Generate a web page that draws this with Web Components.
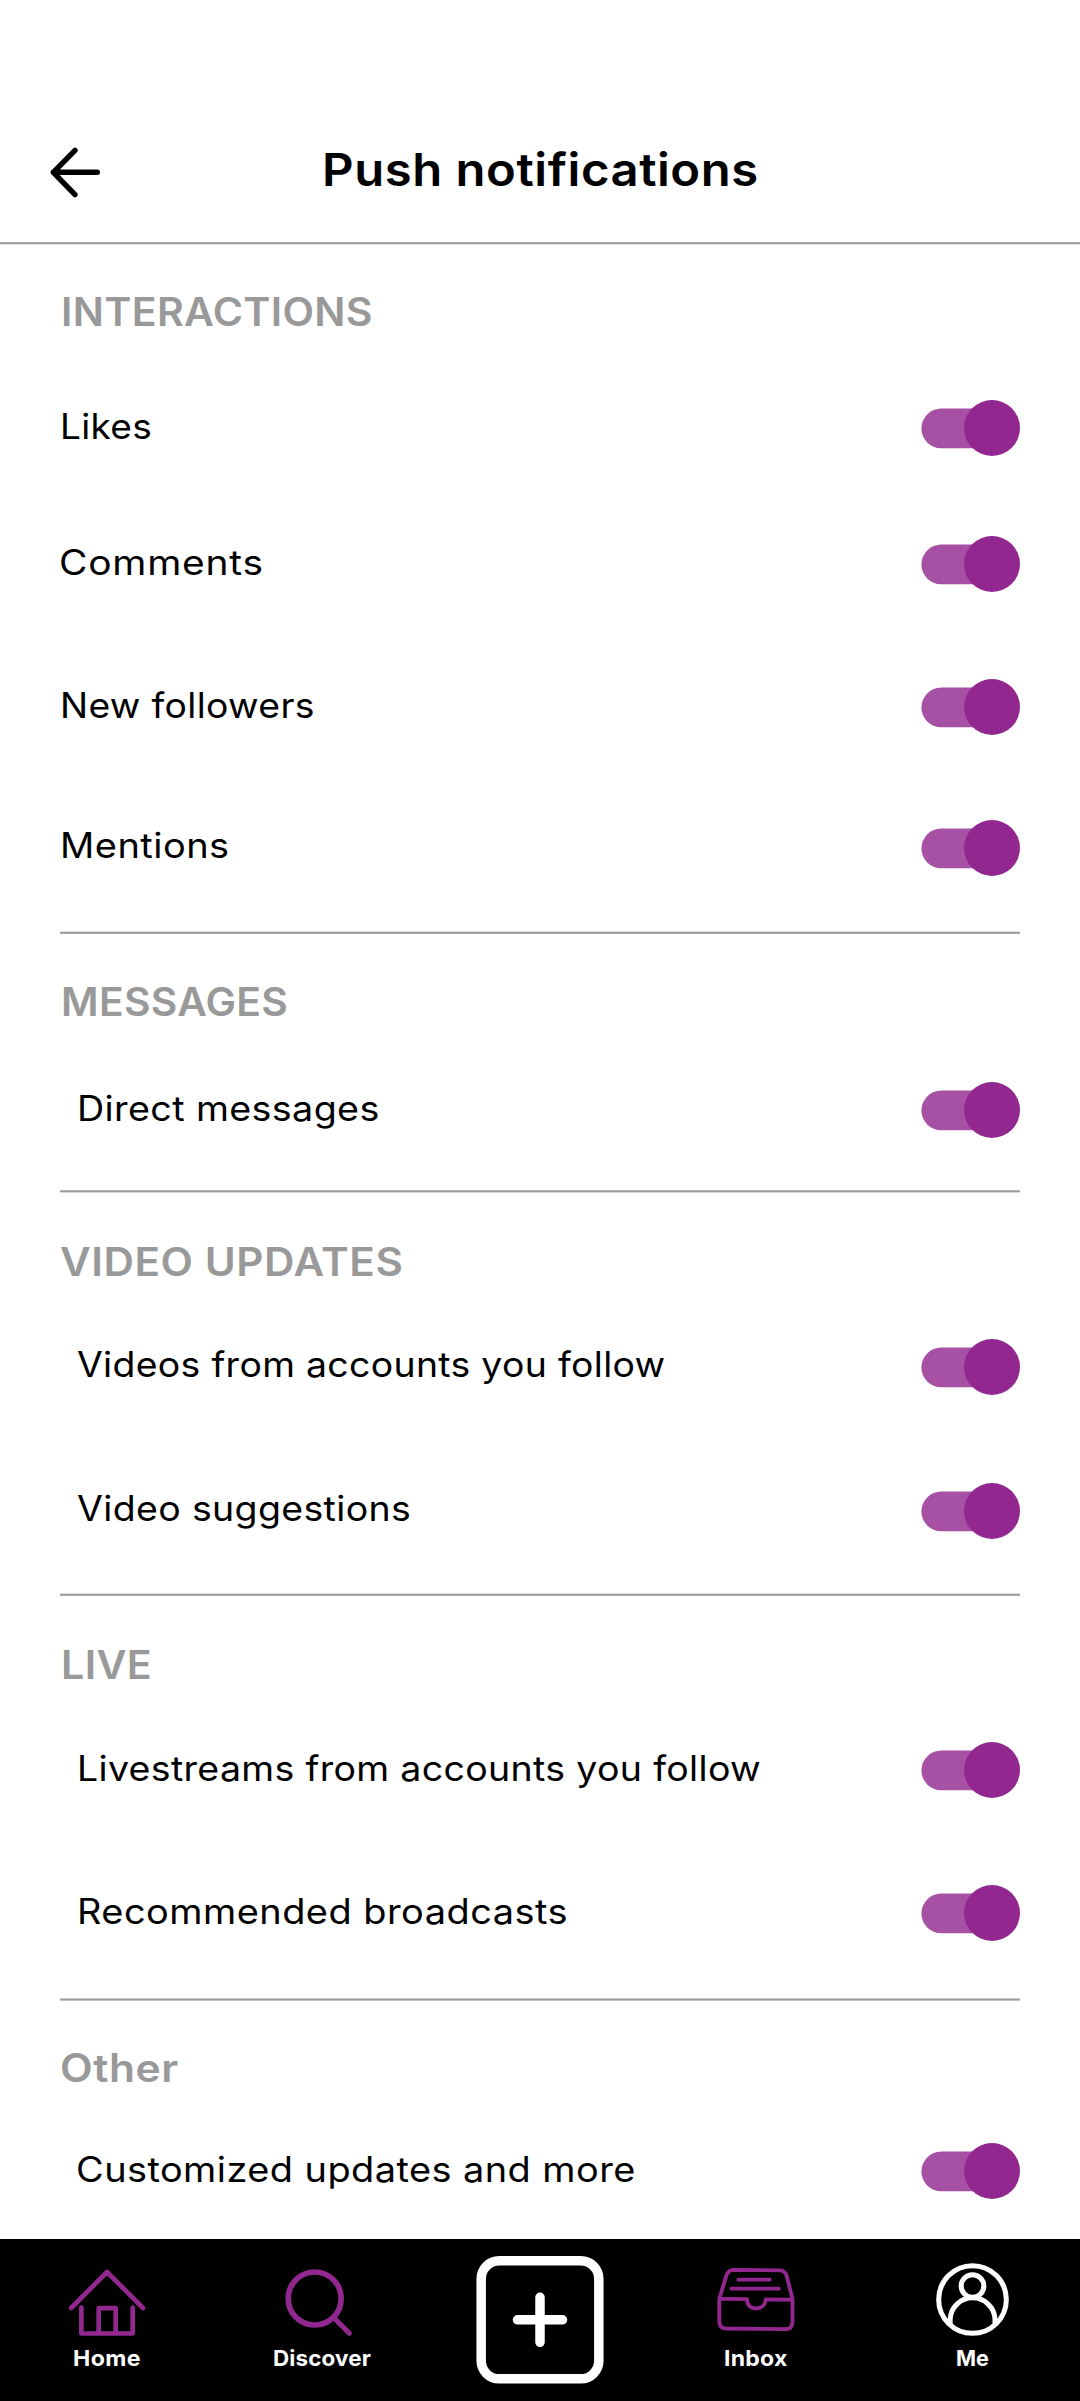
<!DOCTYPE html>
<html lang="en">
<head>
<meta charset="utf-8">
<title>Push notifications</title>
<style>
html,body{margin:0;padding:0;background:#fff}
body{font-family:Inter,"Liberation Sans",sans-serif;color:#000}
</style>
</head>
<body>
<settings-screen>
  <screen-header slot="header"><fit-text size="45" weight="600" ink="324.8" width="431">Push notifications</fit-text></screen-header>
  <thin-rule top=".2" full></thin-rule>

  <section-title gap="47"><fit-text size="39" weight="600" ink="2.8" width="308">INTERACTIONS</fit-text></section-title>
  <toggle-row gap="68.2"><fit-text ink="3.4" width="87.1">Likes</fit-text></toggle-row>
  <toggle-row gap="80"><fit-text ink="1.2" width="200.1">Comments</fit-text></toggle-row>
  <toggle-row gap="87"><fit-text ink="3.4" width="249.7">New followers</fit-text></toggle-row>
  <toggle-row gap="84.5" lift><fit-text ink="3.4" width="164.3">Mentions</fit-text></toggle-row>
  <thin-rule gap="55.3" top=".75"></thin-rule>

  <section-title gap="48"><fit-text size="39" weight="600" ink="3" width="223.3">MESSAGES</fit-text></section-title>
  <toggle-row gap="60.5"><fit-text ink="19.8" width="297.5">Direct messages</fit-text></toggle-row>
  <thin-rule gap="51.5" top=".25"></thin-rule>

  <section-title gap="49"><fit-text size="39" weight="600" ink=".4" width="341.4">VIDEO UPDATES</fit-text></section-title>
  <toggle-row gap="56.8" lift><fit-text ink="17.2" width="587.5">Videos from accounts you follow</fit-text></toggle-row>
  <toggle-row gap="88.2" lift><fit-text ink="17" width="332.2">Video suggestions</fit-text></toggle-row>
  <thin-rule gap="54" top=".7"></thin-rule>

  <section-title gap="49"><fit-text size="39" weight="600" ink="3" width="87">LIVE</fit-text></section-title>
  <toggle-row gap="57.2"><fit-text ink="20.2" width="679.8">Livestreams from accounts you follow</fit-text></toggle-row>
  <toggle-row gap="87"><fit-text ink="20.2" width="485.6">Recommended broadcasts</fit-text></toggle-row>
  <thin-rule gap="56.8" top=".5"></thin-rule>

  <section-title gap="47"><fit-text size="39" weight="600" ink="1.4" width="116.6">Other</fit-text></section-title>
  <toggle-row gap="55.2"><fit-text ink="18" width="555.7">Customized updates and more</fit-text></toggle-row>

  <nav-bar slot="nav"></nav-bar>
</settings-screen>

<script>
const define = (name, html, setup) => customElements.define(name, class extends HTMLElement {
  connectedCallback() {
    if (this.shadowRoot) return;
    this.attachShadow({ mode: 'open' }).innerHTML = html;
    if (setup) setup(this);
  }
});
const applyGap = el => { el.style.marginTop = (el.getAttribute('gap') || 0) + 'px'; };

// One line of text whose ink starts at `ink` and spans `width` pixels.
define('fit-text', `
  <style>
    :host{display:block;white-space:nowrap}
    span{display:inline-block;transform-origin:0 50%}
  </style><span><slot></slot></span>`, el => {
  const size = +(el.getAttribute('size') || 35);
  const weight = el.getAttribute('weight') || 400;
  const text = el.textContent;
  const ctx = document.createElement('canvas').getContext('2d');
  ctx.font = `${weight} ${size}px Inter`;
  const m = ctx.measureText(text);
  const left = -m.actualBoundingBoxLeft;
  const natural = m.actualBoundingBoxRight - left;
  const target = +el.getAttribute('width');
  const stretch = Math.pow(target / natural, 0.8);
  const span = el.shadowRoot.querySelector('span');
  el.style.fontSize = size + 'px';
  el.style.fontWeight = weight;
  span.style.letterSpacing = (target / stretch - natural) / (text.length - 1) + 'px';
  span.style.transform = `scaleX(${stretch})`;
  span.style.marginLeft = (+el.getAttribute('ink') - left * stretch) + 'px';
});

define('screen-header', `
  <style>
    :host{display:flex;box-sizing:border-box;height:242px;padding-top:100px}
    svg{display:block;flex:none;width:60px;height:60px;margin:42px -104px 0 44px}
    ::slotted(fit-text){line-height:139px}
  </style>
  <svg viewBox="44 142 60 60" fill="none" stroke="#000" stroke-width="5.4" stroke-linecap="round" stroke-linejoin="round"><path d="M97.3 172.3H53.3M75 150.4L53.3 172.3L75 194.6"/></svg>
  <slot></slot>`);

define('thin-rule', `
  <style>
    :host{display:block;height:3px;margin-left:60px;margin-right:60px}
    :host([full]){margin-left:0;margin-right:0}
    svg{display:block;width:100%;height:3px}
  </style><svg><rect x="0" width="100%" height="2.1" fill="#999"/></svg>`, el => {
  applyGap(el);
  el.shadowRoot.querySelector('rect').setAttribute('y', el.getAttribute('top'));
});

define('section-title', `
  <style>:host{display:block;height:40px;line-height:40px;padding-left:60px;color:#999}</style><slot></slot>`, applyGap);

define('toggle-switch', `
  <style>:host{display:block;width:99px;height:56px}svg{display:block}</style>
  <svg width="99" height="56" viewBox="0 0 99 56"><rect x=".4" y="8.6" width="70" height="39.6" rx="19.8" fill="#a751a4"/><circle cx="71" cy="28" r="28" fill="#92278f"/></svg>`);

define('toggle-row', `
  <style>
    :host{display:flex;justify-content:space-between;height:56px;padding:0 60px}
    .label{line-height:52px;height:52px}
    :host([lift]) .label{line-height:51px;height:51px}
  </style>
  <div class="label"><slot></slot></div><toggle-switch></toggle-switch>`, applyGap);

define('nav-item', `
  <style>
    :host{display:flex;flex-direction:column;width:216px}
    .icon{height:104px}
    ::slotted(svg){display:block;fill:none;stroke-linecap:round;stroke-linejoin:round}
    .label{height:30px;line-height:30px;color:#fff}
  </style>
  <div class="icon"><slot name="icon"></slot></div><div class="label"><slot></slot></div>`);

// Icon views are drawn at three units per pixel; each covers one 216px column.
define('nav-bar', `
  <style>
    :host{display:flex;height:162px;background:#000;overflow:hidden}
  </style>
  <nav-item>
    <svg slot="icon" width="216" height="104" viewBox="0 27 648 312" stroke="#92278f" stroke-width="14"><path d="M213.5 234L321 126L429 234M244 233V310.5H398V233M296 310V234.5H347V310" /></svg>
    <fit-text size="21.6" weight="700" ink="74" width="66.5">Home</fit-text>
  </nav-item>
  <nav-item>
    <svg slot="icon" width="216" height="104" viewBox="648 27 648 312" stroke="#92278f" stroke-width="17"><circle cx="944" cy="205.5" r="79.5"/><path stroke-width="15" d="M1003 265L1048 310"/></svg>
    <fit-text size="21.6" weight="700" ink="58.3" width="97">Discover</fit-text>
  </nav-item>
  <nav-item>
    <svg slot="icon" width="216" height="162" viewBox="1296 27 648 486" stroke="#fff" stroke-width="28.5"><rect x="1443.5" y="92.5" width="353" height="354" rx="54"/><path d="M1552.5 269.5H1687.5M1620 202V337"/></svg>
  </nav-item>
  <nav-item>
    <svg slot="icon" width="216" height="104" viewBox="1944 27 648 312" stroke="#92278f" stroke-width="11.5"><g transform="translate(2040 0)"><path d="M118 206L138 140Q143 120 160 119.5L300 121Q315 122 320 138L337.5 206V276Q337 297 317 297.5L138 295.5Q118 294 118 276ZM118 206L201 207.5C201 226 212 235 228 235C244 235 256 226 257 208.5L337 209M175 149H269M154 176H296"/></g></svg>
    <fit-text size="21.6" weight="700" ink="77" width="62.7">Inbox</fit-text>
  </nav-item>
  <nav-item>
    <svg slot="icon" width="216" height="104" viewBox="2592 27 648 312" stroke="#fff" stroke-width="15"><g transform="translate(2040 0)"><circle cx="877.5" cy="208.5" r="101.5"/><circle cx="877.5" cy="168" r="34"/><path d="M810.5 278V268A67.3 67 0 0 1 945 268V278"/></g></svg>
    <fit-text size="21.6" weight="700" ink="93" width="32">Me</fit-text>
  </nav-item>`);

define('settings-screen', `
  <style>
    :host{display:flex;flex-direction:column;width:1080px;height:2401px;overflow:hidden;background:#fff}
    main{display:flex;flex-direction:column;flex:1}
  </style>
  <slot name="header"></slot><main><slot></slot></main><slot name="nav"></slot>`);
</script>
</body>
</html>
